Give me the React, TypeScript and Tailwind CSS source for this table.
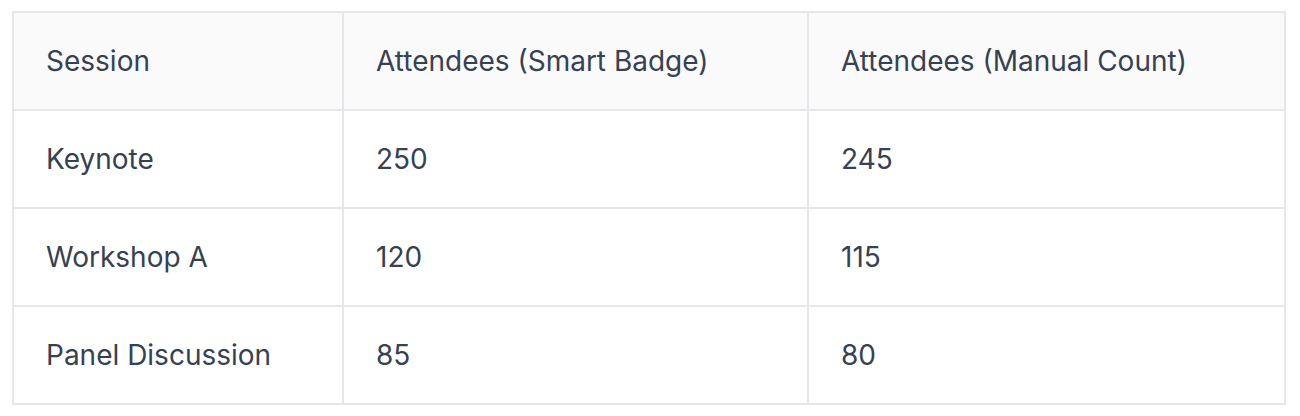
const rows = [
  { session: 'Keynote', badge: '250', manual: '245' },
  { session: 'Workshop A', badge: '120', manual: '115' },
  { session: 'Panel Discussion', badge: '85', manual: '80' },
];

const cell = 'h-[98px] border-2 border-[#e5e7eb] pl-[32px] pr-4 text-left align-middle';

export default function App() {
  return (
    <div className="min-h-screen bg-white pt-[11px] pl-[12px]" style={{ fontFamily: 'Inter, "Noto Sans", sans-serif' }}>
      <table className="w-[1274px] table-fixed border-collapse text-[28px] leading-none text-[#374151]">
        <colgroup>
          <col className="w-[330px]" />
          <col className="w-[465px]" />
          <col />
        </colgroup>
        <thead>
          <tr className="bg-[#fafafa]">
            <th className={`${cell} font-normal`}>Session</th>
            <th className={`${cell} font-normal`}>Attendees (Smart Badge)</th>
            <th className={`${cell} font-normal`}>Attendees (Manual Count)</th>
          </tr>
        </thead>
        <tbody>
          {rows.map((r) => (
            <tr key={r.session}>
              <td className={cell}>{r.session}</td>
              <td className={cell}>{r.badge}</td>
              <td className={cell}>{r.manual}</td>
            </tr>
          ))}
        </tbody>
      </table>
    </div>
  );
}
